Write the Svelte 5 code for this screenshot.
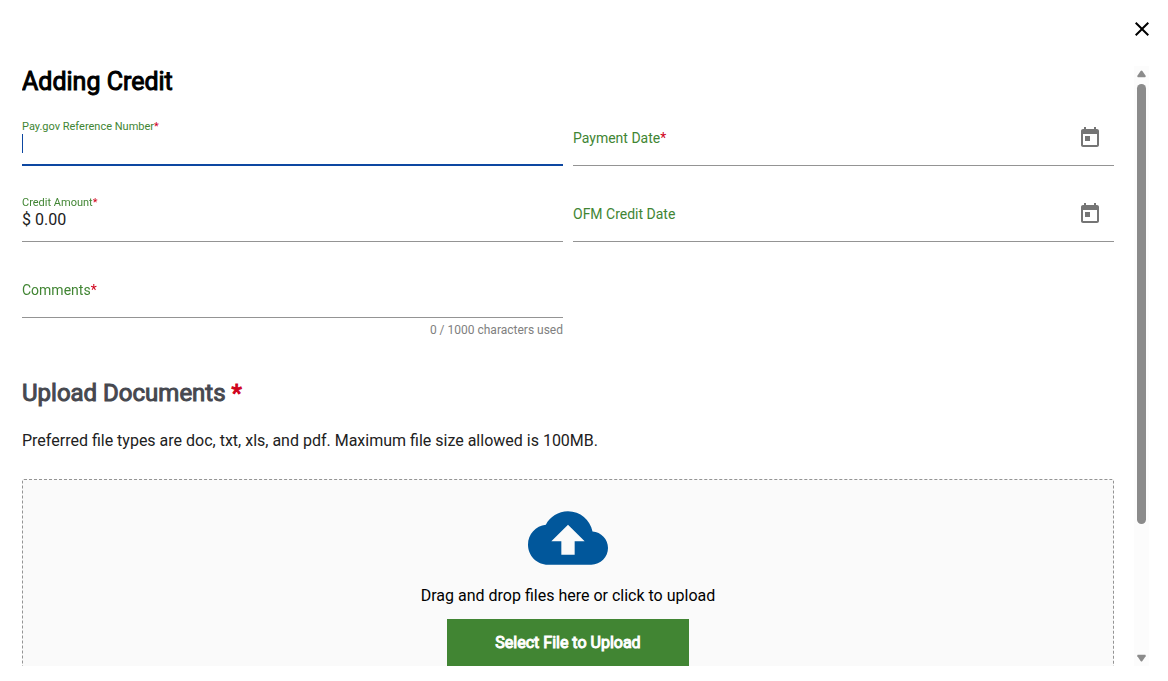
<script lang="ts">
  import { onMount } from 'svelte';

  const MAX_COMMENT = 1000;

  let reference = $state('');
  let amount = $state('$ 0.00');
  let paymentDate = $state('');
  let creditDate = $state('');
  let comments = $state('');
  let focused = $state('reference');

  // Scroll state for the custom scrollbar
  let body: HTMLDivElement;
  let referenceInput: HTMLInputElement;
  let fileInput: HTMLInputElement;
  let thumbSize = $state(100);
  let thumbTop = $state(0);

  function updateThumb() {
    thumbSize = (body.clientHeight / body.scrollHeight) * 100;
    thumbTop = (body.scrollTop / body.scrollHeight) * 100;
  }

  function scrollBy(amount: number) {
    body.scrollBy({ top: amount, behavior: 'smooth' });
  }

  onMount(() => {
    referenceInput.focus({ preventScroll: true });
    updateThumb();
  });
</script>

<svelte:window onresize={updateThumb} />

{#snippet calendar(label: string)}
  <button type="button" class="icon-button" aria-label={label}>
    <svg viewBox="0 0 24 24" width="24" height="24" aria-hidden="true">
      <path d="M19 3h-1V1h-2v2H8V1H6v2H5c-1.11 0-1.99.9-1.99 2L3 19c0 1.1.89 2 2 2h14c1.1 0 2-.9 2-2V5c0-1.1-.9-2-2-2zm0 16H5V8h14v11zM7 10h5v5H7z" />
    </svg>
  </button>
{/snippet}

<div class="dialog" role="dialog" aria-labelledby="dialog-title">
  <header class="dialog-header">
    <button type="button" class="icon-button close" aria-label="Close">
      <svg viewBox="0 0 24 24" width="24" height="24" aria-hidden="true">
        <path d="M19 6.41L17.59 5 12 10.59 6.41 5 5 6.41 10.59 12 5 17.59 6.41 19 12 13.41 17.59 19 19 17.59 13.41 12z" />
      </svg>
    </button>
  </header>

  <div class="dialog-main">
    <div class="dialog-body" bind:this={body} onscroll={updateThumb}>
      <h1 id="dialog-title">Adding Credit</h1>

      <form class="fields">
        <div class="field floating" class:focused={focused === 'reference'}>
          <label for="reference">Pay.gov Reference Number<span class="required">*</span></label>
          <div class="control">
            {#if focused === 'reference' && !reference}<span class="caret"></span>{/if}
            <input
              id="reference"
              type="text"
              autocomplete="off"
              bind:this={referenceInput}
              bind:value={reference}
              class:empty={!reference}
              onfocus={() => (focused = 'reference')}
            />
          </div>
        </div>

        <div class="field" class:floating={paymentDate} class:focused={focused === 'payment'}>
          <label for="payment-date">Payment Date<span class="required">*</span></label>
          <div class="control">
            <input id="payment-date" type="text" bind:value={paymentDate} onfocus={() => (focused = 'payment')} />
          </div>
          {@render calendar('Choose payment date')}
        </div>

        <div class="field floating" class:focused={focused === 'amount'}>
          <label for="amount">Credit Amount<span class="required">*</span></label>
          <div class="control">
            <input id="amount" type="text" bind:value={amount} onfocus={() => (focused = 'amount')} />
          </div>
        </div>

        <div class="field" class:floating={creditDate} class:focused={focused === 'credit'}>
          <label for="credit-date">OFM Credit Date</label>
          <div class="control">
            <input id="credit-date" type="text" bind:value={creditDate} onfocus={() => (focused = 'credit')} />
          </div>
          {@render calendar('Choose OFM credit date')}
        </div>

        <div class="field-group">
          <div class="field" class:floating={comments} class:focused={focused === 'comments'}>
            <label for="comments">Comments<span class="required">*</span></label>
            <div class="control">
              <textarea
                id="comments"
                rows="1"
                maxlength={MAX_COMMENT}
                bind:value={comments}
                onfocus={() => (focused = 'comments')}
              ></textarea>
            </div>
          </div>
          <div class="hint">{comments.length} / {MAX_COMMENT} characters used</div>
        </div>
      </form>

      <h2>Upload Documents <span class="required">*</span></h2>
      <p class="note">Preferred file types are doc, txt, xls, and pdf. Maximum file size allowed is 100MB.</p>

      <div class="dropzone">
        <svg class="cloud" viewBox="0 0 24 24" width="80" height="80" aria-hidden="true">
          <path d="M19.35 10.04C18.67 6.59 15.64 4 12 4 9.11 4 6.6 5.64 5.35 8.04 2.34 8.36 0 10.91 0 14c0 3.31 2.69 6 6 6h13c2.76 0 5-2.24 5-5 0-2.64-2.05-4.78-4.65-4.96zM14 13v4h-4v-4H7l5-5 5 5h-3z" />
        </svg>
        <p>Drag and drop files here or click to upload</p>
        <button type="button" class="upload" onclick={() => fileInput.click()}>Select File to Upload</button>
        <input type="file" hidden aria-label="File" bind:this={fileInput} />
      </div>
    </div>

    <div class="scrollbar">
      <button type="button" class="up" aria-label="Scroll up" onclick={() => scrollBy(-40)}>
        <svg viewBox="0 0 10 8" width="9" height="8" aria-hidden="true">
          <path d="M4 .8Q5 -.4 6 .8L9.6 6Q10 7.5 9 7.5H1Q0 7.5 .4 6Z" />
        </svg>
      </button>
      <div class="track">
        <div class="thumb" style="height: {thumbSize}%; top: {thumbTop}%"></div>
      </div>
      <button type="button" class="down" aria-label="Scroll down" onclick={() => scrollBy(40)}>
        <svg viewBox="0 0 10 8" width="9" height="8" aria-hidden="true">
          <path d="M4 7.2Q5 8.4 6 7.2L9.6 2Q10 .5 9 .5H1Q0 .5 .4 2Z" />
        </svg>
      </button>
    </div>
  </div>
</div>

<style>
  :global(body) {
    background: #fff;
    font-family: Roboto, "Liberation Sans", sans-serif;
  }

  .dialog {
    box-sizing: border-box;
    display: flex;
    flex-direction: column;
    height: 100vh;
    padding: 0 19px 15px 22px;
    color: #212121;
  }

  .dialog-header {
    display: flex;
    flex: none;
    justify-content: flex-end;
    height: 49px;
    padding-top: 17px;
  }

  .icon-button {
    display: block;
    width: 24px;
    height: 24px;
    padding: 0;
    border: 0;
    background: none;
    fill: #757575;
    cursor: pointer;
  }

  .icon-button svg {
    display: block;
  }

  .close {
    margin-right: -5px;
    fill: #000;
  }

  .dialog-main {
    display: flex;
    flex: 1;
    gap: 20px;
    min-height: 0;
  }

  .dialog-body {
    flex: 1;
    min-width: 0;
    overflow-y: auto;
    scrollbar-width: none;
  }

  h1,
  h2 {
    margin: 0;
    font-size: 24px;
    font-weight: 400;
    line-height: 32px;
    -webkit-text-stroke: 1px currentColor;
  }

  h1 {
    color: #000;
    font-size: 25px;
  }

  h2 {
    margin-top: 39px;
    color: #46484f;
  }

  .required {
    color: #d0021b;
  }

  /* Form fields */
  .fields {
    display: grid;
    grid-template-columns: 1fr 1fr;
    gap: 29px 10px;
    margin-top: 21px;
  }

  .field {
    position: relative;
    display: flex;
    align-items: flex-start;
    box-sizing: border-box;
    height: 47px;
    padding-top: 15px;
    border-bottom: 1px solid #949494;
  }

  .field label {
    position: absolute;
    top: 9px;
    left: 0;
    color: #418533;
    font-size: 14px;
    line-height: 20px;
    pointer-events: none;
  }

  .field.floating label {
    top: 1px;
    font-size: 11px;
    line-height: 14px;
  }

  .field.focused {
    border-bottom: 2px solid #0d47a1;
  }

  .field .icon-button {
    margin: -8px 12px 0 0;
  }

  .control {
    position: relative;
    flex: 1;
  }

  .control input,
  .control textarea {
    display: block;
    box-sizing: border-box;
    width: 100%;
    height: 20px;
    padding: 0;
    border: 0;
    outline: 0;
    background: none;
    color: #212121;
    font: 16px/20px Roboto, "Liberation Sans", sans-serif;
    caret-color: #0d47a1;
    resize: none;
  }

  .control input.empty {
    caret-color: transparent;
  }

  .caret {
    position: absolute;
    top: 0;
    left: 0;
    width: 1px;
    height: 19px;
    background: #0d47a1;
  }

  .hint {
    margin-top: 4px;
    color: #808080;
    font-size: 12px;
    line-height: 16px;
    text-align: right;
  }

  .note {
    margin: 20px 0 26px;
    font-size: 16px;
    line-height: 24px;
  }

  /* Upload area */
  .dropzone {
    display: flex;
    flex-direction: column;
    align-items: center;
    margin-bottom: 135px;
    padding: 18px 16px 32px;
    border: 1px dashed #949494;
    border-radius: 2px;
    background: #fafafa;
    color: #000;
  }

  .cloud {
    fill: #01579b;
  }

  .dropzone p {
    margin: 6px 0 11px;
    font-size: 16px;
    line-height: 24px;
  }

  .upload {
    height: 48px;
    padding: 0 48px;
    border: 0;
    background: #418533;
    color: #fff;
    font: 16px/24px Roboto, "Liberation Sans", sans-serif;
    -webkit-text-stroke: 1px currentColor;
    cursor: pointer;
  }

  /* Scrollbar */
  .scrollbar {
    display: flex;
    flex: none;
    flex-direction: column;
    width: 15px;
    background: #fcfcfc;
  }

  .scrollbar button {
    display: flex;
    align-items: center;
    justify-content: center;
    box-sizing: border-box;
    height: 18px;
    padding: 0;
    border: 0;
    background: none;
    fill: #8b8b8b;
  }

  .scrollbar .up {
    padding-bottom: 2px;
  }

  .scrollbar .down {
    padding-top: 2px;
  }

  .track {
    position: relative;
    flex: 1;
  }

  .thumb {
    position: absolute;
    left: 3px;
    width: 9px;
    border-radius: 5px;
    background: #8b8b8b;
  }
</style>
